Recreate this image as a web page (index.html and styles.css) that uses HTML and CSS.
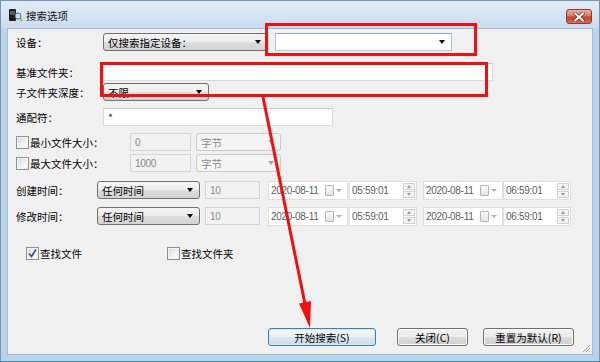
FILE: index.html
```html
<!DOCTYPE html>
<html lang="zh-CN">
<head>
<meta charset="UTF-8">
<meta name="viewport" content="width=device-width, initial-scale=1.0">
<title>搜索选项</title>
<link rel="stylesheet" href="styles.css">
</head>
<body>

<div class="window">
    <div class="titlebar">
        <svg class="app-icon" width="15" height="15" viewBox="0 0 15 15">
            <rect x="1" y="1" width="7" height="12" rx="1" fill="#1d1d1d"/>
            <rect x="2" y="3" width="5" height="4" fill="#5a5a5a"/>
            <circle cx="10" cy="8" r="3" fill="#bfe0f5" stroke="#3a6fa0" stroke-width="1"/>
            <path d="M12 10 L14 13" stroke="#c89a2a" stroke-width="2"/>
        </svg>
        <span class="title">搜索选项</span>
        <div class="close-btn">
            <svg width="12" height="10" viewBox="0 0 12 10">
                <path d="M2 1.5 L10 8.5 M10 1.5 L2 8.5" stroke="#6b2a22" stroke-width="3.4" stroke-linecap="square"/>
                <path d="M2 1.5 L10 8.5 M10 1.5 L2 8.5" stroke="#fff" stroke-width="2" stroke-linecap="square"/>
            </svg>
        </div>
    </div>

    <div class="client">
        <div class="row">
            <span class="lbl lbl-main">设备：</span>
            <div class="combo device-mode"><span>仅搜索指定设备：</span><i class="arr"></i></div>
            <div class="combo-edit device-name"><i class="arr"></i></div>
        </div>
        <div class="row gap-12">
            <span class="lbl lbl-main">基准文件夹：</span>
            <div class="field base-dir"></div>
        </div>
        <div class="row gap-2">
            <span class="lbl lbl-main">子文件夹深度：</span>
            <div class="combo depth"><span>不限</span><i class="arr"></i></div>
        </div>
        <div class="row gap-7">
            <span class="lbl lbl-main">通配符：</span>
            <div class="field wildcard">*</div>
        </div>
        <div class="row gap-7">
            <div class="chk-item size-lbl"><span class="chk"></span>最小文件大小：</div>
            <div class="field disabled size-val num">0</div>
            <div class="combo disabled size-unit"><span>字节</span><i class="arr"></i></div>
        </div>
        <div class="row gap-3">
            <div class="chk-item size-lbl"><span class="chk"></span>最大文件大小：</div>
            <div class="field disabled size-val num">1000</div>
            <div class="combo disabled size-unit"><span>字节</span><i class="arr"></i></div>
        </div>
        <div class="row gap-9">
            <span class="lbl lbl-time">创建时间：</span>
            <div class="combo when"><span>任何时间</span><i class="arr"></i></div>
            <div class="field disabled days num">10</div>
            <div class="date num"><span>2020-08-11</span><i class="cal"></i></div>
            <div class="time num"><span>05:59:01</span><i class="spin"><b class="up"></b><b class="down"></b></i></div>
            <div class="date date-to num"><span>2020-08-11</span><i class="cal"></i></div>
            <div class="time time-to num"><span>06:59:01</span><i class="spin"><b class="up"></b><b class="down"></b></i></div>
        </div>
        <div class="row gap-8">
            <span class="lbl lbl-time">修改时间：</span>
            <div class="combo when"><span>任何时间</span><i class="arr"></i></div>
            <div class="field disabled days num">10</div>
            <div class="date num"><span>2020-08-11</span><i class="cal"></i></div>
            <div class="time num"><span>05:59:01</span><i class="spin"><b class="up"></b><b class="down"></b></i></div>
            <div class="date date-to num"><span>2020-08-11</span><i class="cal"></i></div>
            <div class="time time-to num"><span>06:59:01</span><i class="spin"><b class="up"></b><b class="down"></b></i></div>
        </div>
        <div class="row row-find">
            <div class="chk-item find-files">
                <span class="chk checked">
                    <svg width="11" height="11" viewBox="0 0 11 11"><path d="M2 5.5 L4.5 8.5 L9 1.5" fill="none" stroke="#2f4a8c" stroke-width="1.6"/></svg>
                </span>查找文件
            </div>
            <div class="chk-item"><span class="chk"></span>查找文件夹</div>
        </div>

        <div class="row buttons">
            <button class="btn btn-default start">开始搜索(S)</button>
            <button class="btn close">关闭(C)</button>
            <button class="btn reset">重置为默认(R)</button>
        </div>

        <svg class="grip" width="10" height="10" viewBox="0 0 10 10">
            <path d="M9 2 L2 9 M9 5 L5 9 M9 8 L8 9" stroke="#a7a7a7" stroke-width="1"/>
        </svg>
    </div>
</div>

<!-- red annotation drawn over the dialog -->
<svg class="marks" width="600" height="362" viewBox="0 0 600 362">
    <g fill="none" stroke="#f01010" stroke-width="3">
        <rect x="266.5" y="24.5" width="209" height="30"/>
        <rect x="101.5" y="63.5" width="385" height="32"/>
        <path d="M263 97 L305 304"/>
    </g>
    <polygon points="310,328 299,303.5 311,301" fill="#f01010"/>
</svg>

</body>
</html>
```

FILE: styles.css
```css
* {
    box-sizing: border-box;
}
body {
    margin: 0;
    width: 600px;
    height: 362px;
    overflow: hidden;
    position: relative;
    font-family: "Noto Sans CJK SC", "Noto Sans", sans-serif;
    font-size: 10.5px;
    color: #000;
    background: #bcd2ea;
}

/* window frame */
.window {
    height: 362px;
    display: flex;
    flex-direction: column;
    padding: 0 6px 6px 6px;
    border: 1px solid #7a93ae;
    border-bottom-color: #2b8ea0;
    background: linear-gradient(to bottom, #e1ebf6 0, #cbdcef 27px, #bcd2ea 28px, #bcd2ea 100%);
}
.titlebar {
    height: 27px;
    display: flex;
    align-items: center;
    flex: none;
}
.app-icon {
    margin-left: 1px;
    margin-top: 2px;
}
.title {
    margin-left: 3px;
    margin-top: 2px;
    font-size: 10.5px;
    color: #111;
}
.close-btn {
    margin-left: auto;
    margin-right: 1px;
    align-self: flex-start;
    margin-top: 8px;
    width: 26px;
    height: 15px;
    border: 1px solid #8c3b30;
    border-radius: 3px;
    background: linear-gradient(to bottom, #eab0a2 0, #d77a68 45%, #c4412f 55%, #d5705c 100%);
    display: flex;
    align-items: center;
    justify-content: center;
}

.client {
    flex: 1;
    position: relative;
    background: #f0f0f0;
    border: 1px solid #a3bad3;
    padding: 4px 0 8px 8px;
    display: flex;
    flex-direction: column;
}

/* rows */
.row {
    display: flex;
    align-items: center;
    height: 18px;
    flex: none;
    white-space: nowrap;
}
.gap-2 { margin-top: 2px; }
.gap-3 { margin-top: 3px; }
.gap-7 { margin-top: 7px; }
.gap-8 { margin-top: 8px; }
.gap-9 { margin-top: 9px; }
.gap-12 { margin-top: 12px; }

.lbl {
    flex: none;
}
.lbl-main { width: 87px; }
.lbl-time { width: 81px; }

.num {
    font-family: "Liberation Sans", Arial, sans-serif;
    font-size: 10px;
    letter-spacing: -0.3px;
}

/* combo boxes */
.combo, .combo-edit {
    height: 18px;
    flex: none;
    display: flex;
    align-items: center;
    padding-left: 4px;
}
.combo {
    border: 1px solid #707070;
    border-radius: 3px;
    background: linear-gradient(to bottom, #f4f4f4 0, #ececec 50%, #dedede 50%, #d2d2d2 100%);
}
.combo-edit {
    background: #fff;
    border: 1px solid #abc4de;
    border-top-color: #8cabcc;
}
.arr {
    margin-left: auto;
    margin-right: 6px;
    width: 0;
    height: 0;
    border-left: 3.5px solid transparent;
    border-right: 3.5px solid transparent;
    border-top: 4px solid #000;
}
.combo.disabled {
    background: #f4f4f4;
    border-color: #c9c9c9;
    color: #8a8a8a;
}
.combo.disabled .arr {
    border-top-color: #a8a8a8;
}

.device-mode { width: 165px; }
.device-name { width: 177px; margin-left: 7px; }
.depth { width: 106px; }
.size-unit { width: 85px; margin-left: 5px; }
.when { width: 103px; }

/* text fields */
.field {
    height: 18px;
    flex: none;
    display: flex;
    align-items: center;
    padding-left: 4px;
    background: #fff;
    border: 1px solid #dadada;
    border-top-color: #c9c9c9;
}
.field.disabled {
    background: #f1f1f1;
    border-color: #d5d5d5;
    color: #8a8a8a;
}
.base-dir { width: 390px; }
.wildcard { width: 230px; color: #333; }
.size-val { width: 61px; }
.days { width: 55px; margin-left: 5px; }

/* date & time pickers */
.date, .time {
    height: 19px;
    flex: none;
    display: flex;
    align-items: center;
    padding-left: 2px;
    background: #fff;
    border: 1px solid #dedede;
    color: #5c5c5c;
}
.date { width: 80px; margin-left: 8px; }
.date-to { margin-left: 6px; }
.time { width: 68px; margin-left: 1px; }
.time-to { margin-left: 0; }
.cal {
    margin-left: auto;
    margin-right: 13px;
    width: 9px;
    height: 11px;
    border: 1px solid #b5b5b5;
    border-radius: 1px;
    background: linear-gradient(to bottom, #fafafa, #e4e4e4);
    position: relative;
}
.cal::after {
    content: "";
    position: absolute;
    left: 10px;
    top: 3px;
    border-left: 3px solid transparent;
    border-right: 3px solid transparent;
    border-top: 3px solid #b0b0b0;
}
.spin {
    margin-left: auto;
    margin-right: 1px;
    width: 12px;
    display: flex;
    flex-direction: column;
    gap: 1px;
}
.spin b {
    height: 7px;
    border: 1px solid #d0d0d0;
    background: #f3f3f3;
    display: flex;
    align-items: center;
    justify-content: center;
}
.spin b::after {
    content: "";
    border-left: 2.5px solid transparent;
    border-right: 2.5px solid transparent;
}
.spin .up::after { border-bottom: 3px solid #9a9a9a; }
.spin .down::after { border-top: 3px solid #9a9a9a; }

/* check boxes */
.chk-item {
    display: flex;
    align-items: center;
    flex: none;
}
.size-lbl { width: 114px; }
.chk {
    width: 13px;
    height: 13px;
    margin-right: 1px;
    border: 1px solid #8e8f8f;
    background: linear-gradient(135deg, #d6d6d6 0, #f3f3f3 60%, #fff 100%);
    box-shadow: inset 0 0 0 1px #f4f4f4;
    display: flex;
    align-items: center;
    justify-content: center;
}
.row-find {
    margin-top: 21px;
    height: 14px;
    padding-left: 10px;
}
.find-files { width: 141px; }

/* buttons */
.buttons {
    margin-top: auto;
    padding-left: 252px;
}
.btn {
    height: 18px;
    padding: 0;
    font-family: inherit;
    font-size: 10.5px;
    color: #000;
    border: 1px solid #707070;
    border-radius: 3px;
    background: linear-gradient(to bottom, #f2f2f2 0, #ebebeb 50%, #dddddd 50%, #cfcfcf 100%);
    box-shadow: inset 0 0 0 1px #fbfbfb;
}
.btn-default {
    border-color: #3c7fb1;
    background: linear-gradient(to bottom, #f4f8fb 0, #e9f0f6 50%, #dbe6ef 50%, #d0dde8 100%);
    box-shadow: inset 0 0 0 1px #cfe7f8;
}
.start { width: 108px; }
.close { width: 71px; margin-left: 21px; }
.reset { width: 91px; margin-left: 15px; }

.grip {
    position: absolute;
    right: 1px;
    bottom: 1px;
}

/* annotation overlay */
.marks {
    position: absolute;
    left: 0;
    top: 0;
    pointer-events: none;
}
```
